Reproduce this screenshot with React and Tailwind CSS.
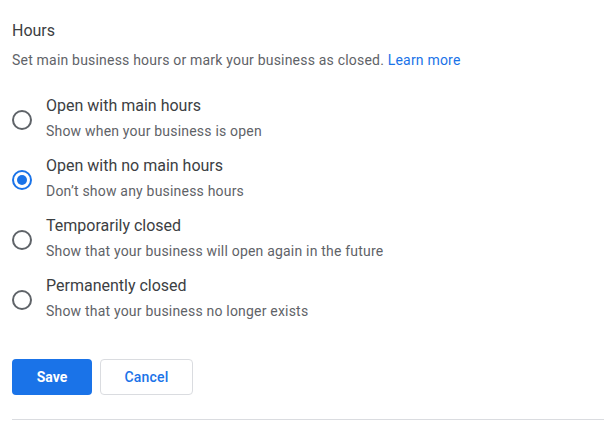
import { useState } from 'react';

const options = [
  { id: 'main', title: 'Open with main hours', desc: 'Show when your business is open' },
  { id: 'nomain', title: 'Open with no main hours', desc: 'Don’t show any business hours' },
  { id: 'temp', title: 'Temporarily closed', desc: 'Show that your business will open again in the future' },
  { id: 'perm', title: 'Permanently closed', desc: 'Show that your business no longer exists' },
];

function Radio({ checked }) {
  return (
    <span
      className={
        'mt-[16px] flex h-[20px] w-[20px] shrink-0 items-center justify-center rounded-full border-2 ' +
        (checked ? 'border-[#1a73e8]' : 'border-[#5f6368]')
      }
    >
      {checked && <span className="h-[10px] w-[10px] rounded-full bg-[#1a73e8]" />}
    </span>
  );
}

export default function App() {
  const [value, setValue] = useState('nomain');

  return (
    <div className="min-h-[421px] bg-white pl-3 pt-[19px] font-['Roboto',sans-serif]">
      {/* Header */}
      <h2 className="text-[16px] leading-6 text-[#3c4043]">Hours</h2>
      <p className="mt-[7px] text-[14px] leading-5 tracking-[0.2px] text-[#5f6368]">
        Set main business hours or mark your business as closed.{' '}
        <a href="#" className="text-[#1a73e8]">Learn more</a>
      </p>

      {/* Options */}
      <div className="mt-6 flex flex-col gap-[13px]">
        {options.map(o => (
          <label key={o.id} className="flex cursor-pointer items-start gap-[14px]" onClick={() => setValue(o.id)}>
            <Radio checked={value === o.id} />
            <div>
              <div className="text-[16px] leading-6 text-[#3c4043]">{o.title}</div>
              <div className="mt-[3px] text-[14px] leading-5 tracking-[0.2px] text-[#5f6368]">{o.desc}</div>
            </div>
          </label>
        ))}
      </div>

      {/* Actions */}
      <div className="mt-[38px] flex gap-2">
        <button className="h-9 w-20 rounded bg-[#1a73e8] text-[14px] font-bold text-white">Save</button>
        <button className="h-9 w-[93px] rounded border border-[#dadce0] bg-white text-[14px] font-medium tracking-[0.2px] text-[#1a73e8]">
          Cancel
        </button>
      </div>

      <div className="mt-6 h-px bg-[#dadce0]" />
    </div>
  );
}
